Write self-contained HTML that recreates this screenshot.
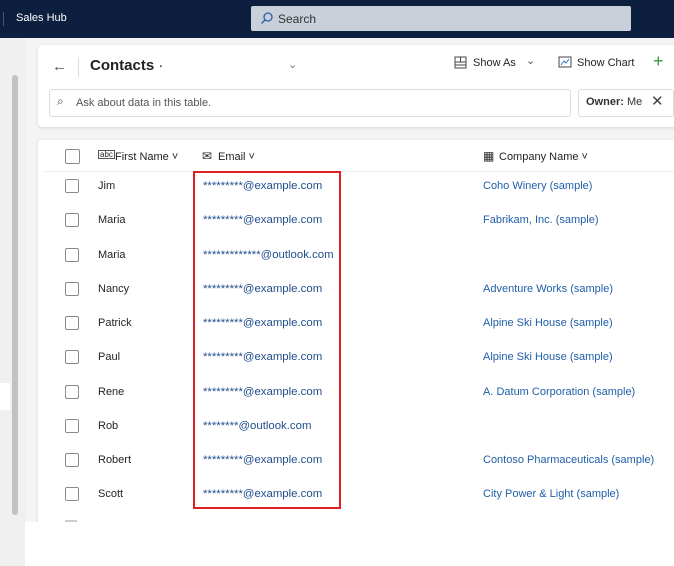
<!DOCTYPE html>
<html><head><style>
body{margin:0;width:674px;height:566px;overflow:hidden;background:#f4f4f4;font-family:"Liberation Sans",sans-serif;position:relative;font-size:11px;color:#242424}
.top{position:absolute;left:0;top:0;width:674px;height:38px;background:#0c1f3f;}
.abs{position:absolute}
.card{position:absolute;background:#fff;box-shadow:0 1px 3px rgba(0,0,0,.12);border-radius:4px}
.row{position:absolute;left:0;width:674px;height:34px}
.cb{position:absolute;left:65px;width:12px;height:12px;border:1px solid #8a8a8a;border-radius:2px;background:#fff}
.fn{position:absolute;left:98px}
.em{position:absolute;left:203px;color:#1f4d8c;font-size:11.4px}
.co{position:absolute;left:483px;color:#1f5fa8}
</style></head><body>
<div class="top">
 <div class="abs" style="left:3px;top:12px;width:1px;height:14px;background:#556"></div>
 <div class="abs" style="left:16px;top:12px;color:#fff;font-size:11px">Sales Hub</div>
 <div class="abs" style="left:251px;top:6px;width:380px;height:25px;background:#c9d0da;border-radius:2px">
  <svg class="abs" style="left:9px;top:5px" width="14" height="14" viewBox="0 0 14 14"><circle cx="8" cy="6" r="4" fill="none" stroke="#2a5ea8" stroke-width="1.3"/><path d="M5 9 L1.5 12.5" stroke="#2a5ea8" stroke-width="1.4"/></svg>
  <span class="abs" style="left:27px;top:6px;color:#333;font-size:12px">Search</span>
 </div>
</div>
<div class="abs" style="left:0;top:38px;width:25px;height:528px;background:#f0f0f0"></div>
<div class="abs" style="left:0;top:383px;width:10px;height:27px;background:#fff"></div>
<div class="abs" style="left:12px;top:75px;width:6px;height:440px;background:#c2c2c2;border-radius:3px"></div>
<div class="card" style="left:38px;top:45px;width:650px;height:82px">
 <div class="abs" style="left:14px;top:13px;font-size:15px;color:#555">←</div>
 <div class="abs" style="left:40px;top:12px;width:1px;height:20px;background:#ddd"></div>
 <div class="abs" style="left:52px;top:12px;font-size:15px;font-weight:bold;color:#222">Contacts <span style="font-weight:normal">·</span></div>
 <div class="abs" style="left:250px;top:13px;color:#777">⌄</div>
 <svg class="abs" style="left:416px;top:11px" width="13" height="13" viewBox="0 0 13 13"><rect x="1" y="1" width="11" height="11" fill="none" stroke="#444"/><path d="M1 6H12M6.5 1V6M1 9H12" stroke="#444"/></svg>
 <div class="abs" style="left:435px;top:12px">Show As</div>
 <div class="abs" style="left:488px;top:9px;color:#555">⌄</div>
 <svg class="abs" style="left:520px;top:11px" width="14" height="13" viewBox="0 0 14 13"><rect x="1" y="1" width="12" height="10" fill="none" stroke="#444"/><path d="M3 9L6 5L8 7L11 3" stroke="#2a7bd0" fill="none"/></svg>
 <div class="abs" style="left:539px;top:12px">Show Chart</div>
 <div class="abs" style="left:615px;top:6px;font-size:18px;color:#3a9a3a">+</div>
 <div class="abs" style="left:11px;top:44px;width:520px;height:26px;border:1px solid #ddd;border-radius:3px"></div>
 <div class="abs" style="left:19px;top:49px;font-size:12px;color:#444">⌕</div>
 <div class="abs" style="left:38px;top:52px;color:#555">Ask about data in this table.</div>
 <div class="abs" style="left:540px;top:44px;width:94px;height:26px;border:1px solid #ddd;border-radius:3px"></div>
 <div class="abs" style="left:548px;top:51px;color:#333"><b style="font-weight:600">Owner:</b> Me</div>
 <div class="abs" style="left:613px;top:47px;font-size:15px;color:#444">✕</div>
</div>
<div class="card" style="left:38px;top:140px;width:650px;height:383px;border-radius:4px 4px 0 0"></div>
<div class="abs" style="left:25px;top:522px;width:649px;height:44px;background:#fff"></div>
<div class="cb" style="top:149px;width:13px;height:13px"></div>
<div class="abs" style="left:98px;top:150px;font-size:8px;border:1px solid #555;line-height:7px;padding:0 1px">abc</div>
<div class="abs" style="left:115px;top:151px">First Name ˅</div>
<div class="abs" style="left:202px;top:149px;font-size:12px">✉</div>
<div class="abs" style="left:218px;top:151px">Email ˅</div>
<div class="abs" style="left:483px;top:149px;font-size:12px">▦</div>
<div class="abs" style="left:499px;top:151px">Company Name ˅</div>
<div class="abs" style="left:44px;top:171px;width:630px;height:1px;background:#eee"></div>

<div class="row" style="top:179px"><div class="cb" style="top:0"></div><div class="fn" style="top:1px">Jim</div><div class="em" style="top:1px">*********@example.com</div><div class="co" style="top:1px">Coho Winery (sample)</div></div>
<div class="row" style="top:213px"><div class="cb" style="top:0"></div><div class="fn" style="top:1px">Maria</div><div class="em" style="top:1px">*********@example.com</div><div class="co" style="top:1px">Fabrikam, Inc. (sample)</div></div>
<div class="row" style="top:248px"><div class="cb" style="top:0"></div><div class="fn" style="top:1px">Maria</div><div class="em" style="top:1px">*************@outlook.com</div></div>
<div class="row" style="top:282px"><div class="cb" style="top:0"></div><div class="fn" style="top:1px">Nancy</div><div class="em" style="top:1px">*********@example.com</div><div class="co" style="top:1px">Adventure Works (sample)</div></div>
<div class="row" style="top:316px"><div class="cb" style="top:0"></div><div class="fn" style="top:1px">Patrick</div><div class="em" style="top:1px">*********@example.com</div><div class="co" style="top:1px">Alpine Ski House (sample)</div></div>
<div class="row" style="top:350px"><div class="cb" style="top:0"></div><div class="fn" style="top:1px">Paul</div><div class="em" style="top:1px">*********@example.com</div><div class="co" style="top:1px">Alpine Ski House (sample)</div></div>
<div class="row" style="top:385px"><div class="cb" style="top:0"></div><div class="fn" style="top:1px">Rene</div><div class="em" style="top:1px">*********@example.com</div><div class="co" style="top:1px">A. Datum Corporation (sample)</div></div>
<div class="row" style="top:419px"><div class="cb" style="top:0"></div><div class="fn" style="top:1px">Rob</div><div class="em" style="top:1px">********@outlook.com</div></div>
<div class="row" style="top:453px"><div class="cb" style="top:0"></div><div class="fn" style="top:1px">Robert</div><div class="em" style="top:1px">*********@example.com</div><div class="co" style="top:1px">Contoso Pharmaceuticals (sample)</div></div>
<div class="row" style="top:487px"><div class="cb" style="top:0"></div><div class="fn" style="top:1px">Scott</div><div class="em" style="top:1px">*********@example.com</div><div class="co" style="top:1px">City Power &amp; Light (sample)</div></div>
<div class="abs" style="left:65px;top:520px;width:12px;height:2px;background:#ccc"></div>
<div class="abs" style="left:193px;top:171px;width:144px;height:334px;border:2px solid #e02020"></div>
</body></html>
